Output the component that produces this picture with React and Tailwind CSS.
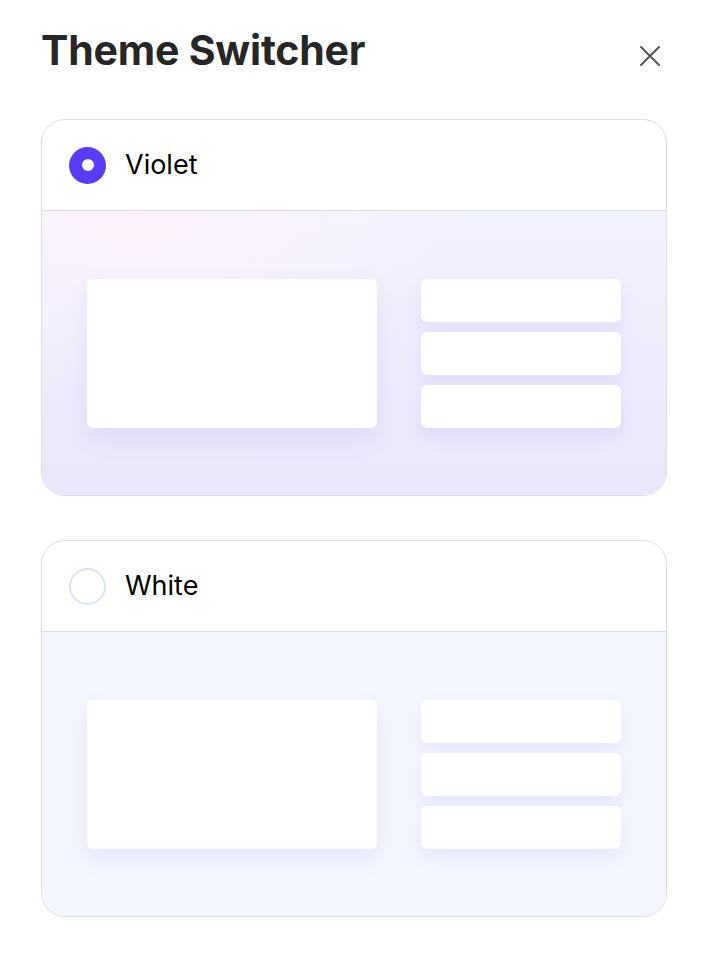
import React, { useState } from 'react';

// Mini preview of a page layout inside each theme option
const Preview = ({ bg }) => (
    <div className={`flex gap-[44px] px-[45px] pt-[68px] pb-[67px] ${bg}`}>
        <div className="h-[149px] w-[290px] rounded-md bg-white shadow-[0_10px_24px_rgba(110,90,240,0.10)]" />
        <div className="flex flex-1 flex-col gap-[10px]">
            <div className="h-[43px] rounded-md bg-white shadow-[0_8px_18px_rgba(110,90,240,0.10)]" />
            <div className="h-[43px] rounded-md bg-white shadow-[0_8px_18px_rgba(110,90,240,0.10)]" />
            <div className="h-[43px] rounded-md bg-white shadow-[0_8px_18px_rgba(110,90,240,0.10)]" />
        </div>
    </div>
);

const ThemeOption = ({ label, selected, onSelect, bg }) => (
    <div
        onClick={onSelect}
        className="w-[626px] cursor-pointer overflow-hidden rounded-[24px] border border-[#dedee2] bg-white"
    >
        <div className="flex h-[91px] items-center gap-[19px] border-b border-[#dedee2] px-[27px]">
            {selected ? (
                <span className="flex h-[37px] w-[37px] items-center justify-center rounded-full bg-[#5a3cf6]">
                    <span className="h-[12px] w-[12px] rounded-full bg-white" />
                </span>
            ) : (
                <span className="h-[37px] w-[37px] rounded-full border-2 border-[#dbe2fb]" />
            )}
            <span className="text-[27px] text-black">{label}</span>
        </div>
        <Preview bg={bg} />
    </div>
);

export default function App() {
    const [theme, setTheme] = useState('violet');

    return (
        <div className="min-h-[954px] bg-white px-[41px] font-['Inter','Liberation_Sans',sans-serif]">
            <div className="flex w-[626px] items-center justify-between pt-[24px] pb-[43px]">
                <h1 className="text-[41px] font-bold leading-[52px] tracking-[-0.2px] text-[#262626]">
                    Theme Switcher
                </h1>
                <button className="mr-[5px] mt-[12px] text-[#555]">
                    <svg width="24" height="24" viewBox="0 0 24 24" fill="none" stroke="currentColor" strokeWidth="2" strokeLinecap="round">
                        <path d="M3 3 L21 21 M21 3 L3 21" />
                    </svg>
                </button>
            </div>

            <div className="flex flex-col gap-[44px]">
                <ThemeOption
                    label="Violet"
                    selected={theme === 'violet'}
                    onSelect={() => setTheme('violet')}
                    bg="bg-[radial-gradient(ellipse_at_15%_0%,#fdf2fc_0%,rgba(253,242,252,0)_45%),linear-gradient(180deg,#f1f3fe_0%,#ebe5fa_100%)]"
                />
                <ThemeOption
                    label="White"
                    selected={theme === 'white'}
                    onSelect={() => setTheme('white')}
                    bg="bg-[#f4f6fe]"
                />
            </div>
        </div>
    );
}
